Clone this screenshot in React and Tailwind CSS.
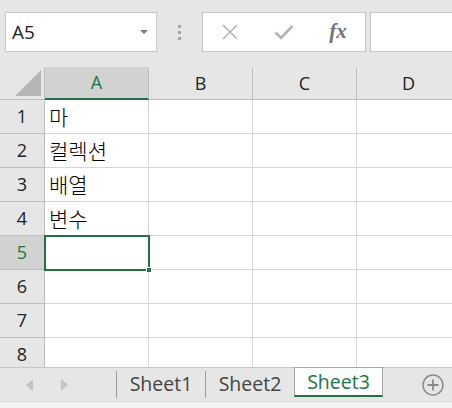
import React from 'react';

const cols = ['A', 'B', 'C', 'D'];
const rows = [
  { n: 1, v: '마' },
  { n: 2, v: '컬렉션' },
  { n: 3, v: '배열' },
  { n: 4, v: '변수' },
  { n: 5, v: '' },
  { n: 6, v: '' },
  { n: 7, v: '' },
  { n: 8, v: '' },
];

const ui = { fontFamily: '"Open Sans", "Noto Sans", "Noto Sans CJK KR", sans-serif' };
const kr = { fontFamily: '"Noto Sans CJK KR", "Noto Sans", sans-serif' };

export default function App() {
  return (
    <div className="w-[452px] h-[408px] overflow-hidden bg-white flex flex-col select-none" style={ui}>
      {/* formula bar */}
      <div className="h-[67px] shrink-0 bg-[#e6e6e6] flex items-start pt-[12px]">
        <div className="ml-[5px] w-[152px] h-[40px] bg-white border border-[#c6c6c6] flex items-center justify-between pl-[6px] pr-[8px]">
          <span className="text-[19px] text-[#222]">A5</span>
          <svg width="8" height="5" viewBox="0 0 8 5"><path d="M0 0h8L4 4z" fill="#7a7a7a" /></svg>
        </div>
        <div className="w-[45px] h-[40px] flex flex-col items-center justify-center gap-[3px]">
          <div className="w-[3px] h-[3px] bg-[#a6a6a6]" />
          <div className="w-[3px] h-[3px] bg-[#a6a6a6]" />
          <div className="w-[3px] h-[3px] bg-[#a6a6a6]" />
        </div>
        <div className="w-[164px] h-[40px] bg-white border border-[#c6c6c6] flex items-center">
          <div className="w-[54px] flex justify-center">
            <svg width="16" height="16" viewBox="0 0 16 16"><path d="M1 1L15 15M15 1L1 15" stroke="#b4b4b4" strokeWidth="1.6" /></svg>
          </div>
          <div className="w-[54px] flex justify-center">
            <svg width="20" height="16" viewBox="0 0 20 16"><path d="M1.5 8.5L7 14L18.5 2" stroke="#b4b4b4" strokeWidth="2.6" fill="none" /></svg>
          </div>
          <div className="flex-1 flex justify-center">
            <span className="text-[21px] italic text-[#747474] font-bold" style={{ fontFamily: '"Liberation Serif", serif' }}>fx</span>
          </div>
        </div>
        <div className="ml-[4px] flex-1 h-[40px] bg-white border border-[#c6c6c6] border-r-0" />
      </div>

      {/* grid */}
      <div className="relative flex-1 overflow-hidden">
        <div className="flex h-[33px]">
          <div className="w-[45px] shrink-0 bg-[#e6e6e6] border-r border-b border-[#bdbdbd] flex items-end justify-end pr-[3px] pb-[3px]">
            <svg width="26" height="26" viewBox="0 0 26 26"><path d="M26 0V26H0z" fill="#b6b6b6" /></svg>
          </div>
          {cols.map((c, i) => (
            <div
              key={c}
              className={
                i === 0
                  ? 'w-[104px] shrink-0 bg-[#d2d2d2] border-r border-[#bdbdbd] border-b-2 border-b-[#217346] flex items-center justify-center text-[18px] text-[#217346]'
                  : 'w-[104px] shrink-0 bg-[#e6e6e6] border-r border-b border-[#bdbdbd] flex items-center justify-center text-[18px] text-[#222]'
              }
            >
              {c}
            </div>
          ))}
        </div>
        {rows.map((r) => (
          <div key={r.n} className="flex h-[34px]">
            <div
              className={
                r.n === 5
                  ? 'w-[45px] shrink-0 bg-[#d2d2d2] border-r border-b border-[#bdbdbd] flex items-center justify-center text-[18px] text-[#217346]'
                  : 'w-[45px] shrink-0 bg-[#e6e6e6] border-r border-b border-[#bdbdbd] flex items-center justify-center text-[18px] text-[#222]'
              }
            >
              {r.n}
            </div>
            {cols.map((c, i) => (
              <div key={c} className="w-[104px] shrink-0 border-r border-b border-[#d4d4d4] flex items-center pl-[4px] text-[21px] font-light text-[#000]" style={kr}>
                {i === 0 ? r.v : ''}
              </div>
            ))}
          </div>
        ))}
        {/* selection A5 */}
        <div className="absolute left-[44px] top-[168px] w-[106px] h-[36px] border-2 border-[#217346]">
          <div className="absolute -right-[4px] -bottom-[4px] w-[6px] h-[6px] bg-[#217346] border border-white" />
        </div>
      </div>

      {/* sheet tabs */}
      <div className="h-[34px] shrink-0 bg-[#e6e6e6] border-t border-[#c6c6c6] flex items-stretch">
        <div className="w-[116px] flex items-center">
          <svg className="ml-[26px]" width="8" height="12" viewBox="0 0 8 12"><path d="M7 0V12L0 6z" fill="#c4c4c4" /></svg>
          <svg className="ml-[26px]" width="8" height="12" viewBox="0 0 8 12"><path d="M1 0V12L8 6z" fill="#c4c4c4" /></svg>
        </div>
        <div className="w-px my-[3px] bg-[#9a9a9a]" />
        <div className="w-[88px] flex items-center justify-center text-[19.5px] text-[#444] pb-[2px]">Sheet1</div>
        <div className="w-px my-[3px] bg-[#9a9a9a]" />
        <div className="w-[88px] flex items-center justify-center text-[19.5px] text-[#444] pb-[2px]">Sheet2</div>
        <div className="w-[89px] -mt-px bg-white border-x border-t border-[#a6a6a6] border-b-2 border-b-[#217346] mb-[4px] flex items-center justify-center text-[19.5px] text-[#217346]">Sheet3</div>
        <div className="flex-1 flex items-center justify-end pr-[8px]">
          <svg width="22" height="22" viewBox="0 0 22 22">
            <circle cx="11" cy="11" r="10" fill="none" stroke="#8a8a8a" strokeWidth="1.5" />
            <path d="M11 5.5V16.5M5.5 11H16.5" stroke="#8a8a8a" strokeWidth="1.8" />
          </svg>
        </div>
      </div>
      <div className="h-[7px] shrink-0 bg-[#f3f3f3] border-t border-[#d8d8d8]" />
    </div>
  );
}
